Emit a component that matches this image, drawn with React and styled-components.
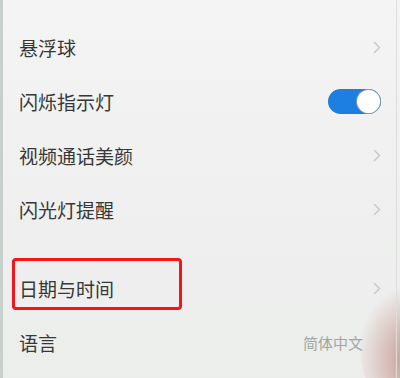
import styled, { createGlobalStyle } from "styled-components";

const GlobalStyle = createGlobalStyle`
  html, body {
    margin: 0;
    padding: 0;
    background: #eff0ef;
  }
  body {
    font-family: "Noto Sans CJK SC", "Noto Sans", sans-serif;
  }
`;

const items = [
  { label: "悬浮球", kind: "arrow" },
  { label: "闪烁指示灯", kind: "switch" },
  { label: "视频通话美颜", kind: "arrow" },
  { label: "闪光灯提醒", kind: "arrow" },
];

const items2 = [
  { label: "日期与时间", kind: "arrow", marked: true },
  { label: "语言", kind: "value", value: "简体中文" },
];

const Chevron = () => (
  <svg width="8" height="13" viewBox="0 0 8 13">
    <path
      d="M1.5 1.5 L6.5 6.5 L1.5 11.5"
      fill="none"
      stroke="#c8c9c8"
      strokeWidth="1.5"
      strokeLinecap="round"
      strokeLinejoin="round"
    />
  </svg>
);

const Row = ({ item }) => (
  <Item>
    {item.marked && <Mark />}
    <Label>{item.label}</Label>
    {item.kind === "arrow" && <Chevron />}
    {item.kind === "switch" && (
      <Switch>
        <Knob />
      </Switch>
    )}
    {item.kind === "value" && <Value>{item.value}</Value>}
  </Item>
);

const App = () => {
  return (
    <>
      <GlobalStyle />
      <Screen>
        <Group>
          {items.map((it) => (
            <Row key={it.label} item={it} />
          ))}
        </Group>
        <Group>
          {items2.map((it) => (
            <Row key={it.label} item={it} />
          ))}
        </Group>
        <Finger />
      </Screen>
    </>
  );
};

export default App;

const Screen = styled.div`
  position: relative;
  width: 400px;
  height: 378px;
  box-sizing: border-box;
  padding-top: 20px;
  display: flex;
  flex-direction: column;
  gap: 25px;
  overflow: hidden;
  border-left: 3px solid #c9d0cc;
  background: linear-gradient(#f3f4f3, #eeefee 60%, #eceeec);
  &::after {
    content: "";
    position: absolute;
    top: 0;
    bottom: 0;
    right: 3px;
    width: 1px;
    background: #dcdedc;
  }
`;

const Group = styled.div`
  display: flex;
  flex-direction: column;
`;

const Item = styled.div`
  position: relative;
  height: 54px;
  display: flex;
  align-items: center;
  justify-content: space-between;
  padding: 0 19px 0 16px;
`;

const Label = styled.span`
  font-size: 19px;
  color: #363836;
  line-height: 1;
`;

const Value = styled.span`
  font-size: 15px;
  color: #a3a5a3;
  margin-right: 18px;
`;

const Switch = styled.div`
  width: 53px;
  height: 25px;
  border-radius: 13px;
  background: #1c7fe1;
  display: flex;
  align-items: center;
  justify-content: flex-end;
  padding-right: 1px;
  box-sizing: border-box;
`;

const Knob = styled.div`
  width: 23px;
  height: 23px;
  border-radius: 50%;
  background: #ffffff;
  box-shadow: 0 0 0 1px #8a9aa8;
`;

const Mark = styled.div`
  position: absolute;
  left: 9px;
  top: -3px;
  width: 170px;
  height: 52px;
  box-sizing: border-box;
  border: 3px solid #f5141a;
  border-radius: 4px;
`;

const Finger = styled.div`
  position: absolute;
  right: -40px;
  bottom: -30px;
  width: 80px;
  height: 120px;
  border-radius: 50%;
  background: radial-gradient(
    ellipse at 70% 60%,
    rgba(180, 110, 100, 0.75),
    rgba(200, 150, 140, 0.35) 50%,
    rgba(230, 220, 215, 0) 75%
  );
`;
